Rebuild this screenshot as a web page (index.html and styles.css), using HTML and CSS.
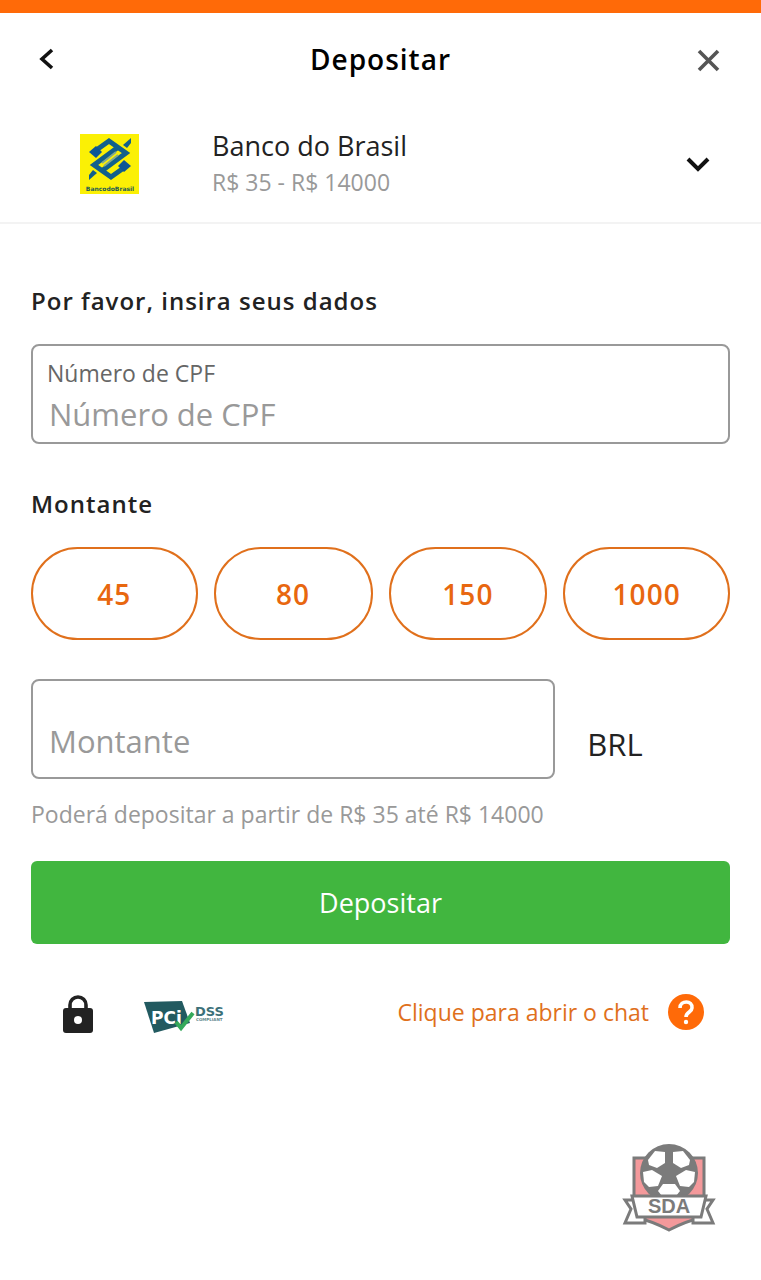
FILE: index.html
```html
<!DOCTYPE html>
<html lang="pt-BR">
<head>
    <meta charset="UTF-8">
    <meta name="viewport" content="width=device-width, initial-scale=1.0">
    <title>Depositar</title>
    <link rel="stylesheet" href="styles.css">
</head>
<body>
    <header class="topo">
        <button type="button" class="btn-icone" aria-label="Voltar">
            <svg width="30" height="30" viewBox="0 0 30 30"><path d="M21 6L11 15L21 24" fill="none" stroke="#111" stroke-width="3.6"/></svg>
        </button>
        <h1>Depositar</h1>
        <button type="button" class="btn-icone" aria-label="Fechar">
            <svg width="30" height="30" viewBox="0 0 30 30"><path d="M6 7L25 26M25 7L6 26" fill="none" stroke="#555" stroke-width="3.6"/></svg>
        </button>
    </header>

    <section class="banco">
        <svg width="60" height="60" viewBox="0 0 60 60">
            <rect width="59" height="60" fill="#fbf005"/>
            <g id="meioLogo">
                <path d="M15 17L29 7L46 19L23 36" fill="none" stroke="#12608c" stroke-width="5"/>
                <path d="M9 18L16 12L22 18L16 24z" fill="#0b5596"/>
                <path d="M43 11L51 4L51 9L47 14z" fill="#12608c"/>
            </g>
            <use href="#meioLogo" transform="rotate(180 30 25)"/>
            <path d="M22 29L36 18M24 32L38 21" stroke="#83a98c" stroke-width="2"/>
            <text x="30" y="57" text-anchor="middle" font-size="6" font-weight="700" fill="#245c55">BancodoBrasil</text>
        </svg>
        <div class="banco-info">
            <h2>Banco do Brasil</h2>
            <p>R$ 35 - R$ 14000</p>
        </div>
        <button type="button" class="btn-icone" aria-label="Ver bancos">
            <svg width="30" height="30" viewBox="0 0 30 30"><path d="M5 10L15 20L25 10" fill="none" stroke="#111" stroke-width="4"/></svg>
        </button>
    </section>

    <main>
        <form>
            <h3>Por favor, insira seus dados</h3>
            <div class="campo">
                <label for="cpf">Número de CPF</label>
                <input type="text" id="cpf" placeholder="Número de CPF">
            </div>

            <h3 id="tituloMontante">Montante</h3>
            <div class="valores">
                <button type="button">45</button>
                <button type="button">80</button>
                <button type="button">150</button>
                <button type="button">1000</button>
            </div>

            <div class="linha-montante">
                <div class="campo campo-montante">
                    <input type="text" id="montante" placeholder="Montante" aria-labelledby="tituloMontante">
                </div>
                <span class="moeda">BRL</span>
            </div>
            <p class="dica">Poderá depositar a partir de R$ 35 até R$ 14000</p>

            <button type="submit" class="btn-depositar">Depositar</button>
        </form>

        <div class="rodape">
            <svg width="32" height="42" viewBox="0 0 32 42">
                <path d="M8 18V14a8 8 0 0 1 16 0v4" fill="none" stroke="#222" stroke-width="3.6"/>
                <rect x="1" y="17" width="30" height="25" rx="3" fill="#222"/>
                <circle cx="16" cy="29" r="4" fill="#fff"/>
            </svg>
            <svg class="pci" width="82" height="42" viewBox="0 0 82 42">
                <path d="M0 11L38 10L46 32L10 42z" fill="#225a60"/>
                <text x="7" y="33" font-size="17" font-weight="700" fill="#fff">PCi</text>
                <path d="M32 31L37 37L49 22" fill="none" stroke="#35a95a" stroke-width="4"/>
                <text x="51" y="25" font-size="13" font-weight="700" fill="#3c7179">DSS</text>
                <text x="52" y="30" font-size="4" font-weight="700" fill="#5e868c">COMPLIANT</text>
            </svg>
            <a href="#" class="chat">
                Clique para abrir o chat
                <svg width="38" height="38" viewBox="0 0 38 38">
                    <circle cx="19" cy="19" r="18" fill="#ff6a08"/>
                    <path d="M13 15C13 7 26 7 25 15C25 19 19 19 19 24" fill="none" stroke="#fff" stroke-width="3.6"/>
                    <circle cx="19" cy="29" r="2.2" fill="#fff"/>
                </svg>
            </a>
        </div>
    </main>

    <footer>
        <svg width="94" height="90" viewBox="0 0 94 90">
            <path d="M12 15H82V74Q64 78 47 87Q30 78 12 74z" fill="#f4999b" stroke="#7b7b7b" stroke-width="3"/>
            <!-- bola -->
            <circle cx="47" cy="30" r="29" fill="#7b7b7b"/>
            <g fill="#fff">
                <path d="M26 17L33 8L43 9L43 20L35 25L27 22z"/>
                <path d="M68 17L61 8L51 9L51 20L59 25L67 22z"/>
                <path d="M21 29L30 27L40 33L36 43L27 44L22 39z"/>
                <path d="M73 29L64 27L54 33L58 43L67 44L72 39z"/>
                <path d="M41 41H53L58 48L54 53H40L36 48z"/>
            </g>
            <!-- faixa -->
            <path d="M12 57H3L9 66L3 80H23V72M82 57H91L85 66L91 80H71V72" fill="#fff" stroke="#7b7b7b" stroke-width="3"/>
            <path d="M10 53H84L79 74H15z" fill="#fff" stroke="#7b7b7b" stroke-width="3"/>
            <text class="sda" x="47" y="70" text-anchor="middle" font-size="20" font-weight="700" fill="#7b7b7b">SDA</text>
        </svg>
    </footer>
</body>
</html>
```

FILE: styles.css
```css
* {
    box-sizing: border-box;
    margin: 0;
    padding: 0;
}

body {
    font-family: "Open Sans", "Noto Sans", sans-serif;
    background-color: #fff;
    color: #222;
    border-top: 13px solid #ff6a08;
}

button, input {
    font-family: inherit;
}

button {
    cursor: pointer;
}

svg {
    display: block;
    flex-shrink: 0;
}

svg text {
    font-family: "DejaVu Sans", Verdana, sans-serif;
}

svg .sda {
    font-family: "Liberation Sans", Arial, sans-serif;
}

.topo {
    display: flex;
    align-items: center;
    justify-content: space-between;
    height: 92px;
    padding: 0 31px;
}

h1 {
    font-size: 28px;
    font-weight: 600;
    letter-spacing: 1px;
    color: #000;
}

.btn-icone {
    width: 37px;
    background: none;
    border: none;
}

.banco {
    display: flex;
    align-items: center;
    height: 119px;
    padding: 0 41px 0 80px;
    border-bottom: 2px solid #f3f3f3;
}

.banco-info {
    flex: 1;
    margin-left: 72px;
}

h2 {
    font-size: 27px;
    line-height: 36px;
    font-weight: 400;
}

.banco-info p {
    font-size: 23px;
    line-height: 36px;
    color: #999;
}

main {
    padding: 60px 31px 0;
}

h3 {
    font-size: 24px;
    line-height: 34px;
    font-weight: 600;
    letter-spacing: 1px;
}

.campo {
    display: flex;
    flex-direction: column;
    justify-content: flex-end;
    height: 100px;
    margin: 26px 0 43px;
    padding: 0 14px 6px;
    border: 2px solid #999;
    border-radius: 8px;
}

.campo label {
    font-size: 23px;
    line-height: 38px;
    color: #666;
}

.campo input {
    width: 100%;
    height: 44px;
    padding: 0 2px;
    border: none;
    outline: none;
    font-size: 31px;
    color: #222;
}

.campo input::placeholder {
    color: #999;
}

.valores {
    display: grid;
    grid-template-columns: 21fr 20fr 20fr 21fr;
    gap: 16px;
    margin: 26px 0 39px;
}

.valores button {
    height: 93px;
    background-color: #fff;
    border: 2px solid #e0701c;
    border-radius: 48px;
    font-size: 28px;
    font-weight: 600;
    letter-spacing: 1px;
    color: #e8670f;
}

.linha-montante {
    display: flex;
    align-items: flex-end;
    gap: 32px;
}

.campo-montante {
    width: 75%;
    margin: 0;
    padding-bottom: 14px;
}

.moeda {
    padding-bottom: 14px;
    font-size: 31px;
    line-height: 42px;
}

.dica {
    margin: 18px 0 30px;
    font-size: 23px;
    line-height: 34px;
    color: #999;
}

.btn-depositar {
    width: 100%;
    height: 83px;
    background-color: #41b63f;
    border: none;
    border-radius: 6px;
    font-size: 27px;
    color: #fff;
}

.rodape {
    display: flex;
    align-items: center;
    margin-top: 47px;
    padding: 0 25px 0 31px;
}

.pci {
    margin-left: 50px;
}

.chat {
    display: flex;
    align-items: center;
    gap: 18px;
    margin-left: auto;
    font-size: 23px;
    color: #e0701c;
    text-decoration: none;
}

footer {
    display: flex;
    justify-content: flex-end;
    padding: 110px 45px 40px;
}
```
